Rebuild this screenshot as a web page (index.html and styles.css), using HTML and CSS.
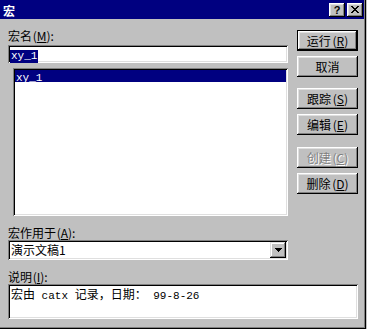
FILE: index.html
```html
<!DOCTYPE html>
<html lang="zh-CN">
<head>
  <meta charset="UTF-8" />
  <title>宏</title>
  <link rel="stylesheet" href="styles.css">
</head>
<body>

  <div class="window">
    <!-- Title bar -->
    <div class="titlebar">
      <span class="title">宏</span>
      <div class="title-buttons">
        <span class="tbtn help">?</span>
        <span class="tbtn">
          <svg width="8" height="7" viewBox="0 0 8 7">
            <path d="M0 0h2v1h1v1h2v-1h1v-1h2v1h-1v1h-1v1h-1v1h1v1h1v1h1v1h-2v-1h-1v-1h-2v1h-1v1h-2v-1h1v-1h1v-1h1v-1h-1v-1h-1v-1h-1z" fill="#000"/>
          </svg>
        </span>
      </div>
    </div>

    <div class="content">
      <div class="main">
        <div class="left">
          <div class="label">宏名 (<u>M</u>):</div>
          <div class="field name-field"><span class="mono selected">xy_1</span></div>
          <div class="field list">
            <div class="list-item selected"><span class="mono">xy_1</span></div>
          </div>
        </div>

        <div class="buttons">
          <button class="btn default">运行 (<u>R</u>)</button>
          <button class="btn">取消</button>
          <button class="btn sep">跟踪 (<u>S</u>)</button>
          <button class="btn">编辑 (<u>E</u>)</button>
          <button class="btn sep2 disabled">创建 (<u>C</u>)</button>
          <button class="btn">删除 (<u>D</u>)</button>
        </div>
      </div>

      <div class="label spaced">宏作用于 (<u>A</u>):</div>
      <div class="field combo">
        <span class="combo-text">演示文稿1</span>
        <span class="combo-button">
          <svg width="7" height="4" viewBox="0 0 7 4">
            <path d="M0 0h7v1h-1v1h-1v1h-1v1h-1v-1h-1v-1h-1v-1h-1z" fill="#000"/>
          </svg>
        </span>
      </div>

      <div class="label spaced">说明 (<u>I</u>):</div>
      <div class="field description">宏由<span class="mono"> catx </span>记录，日期：<span class="mono"> 99-8-26</span></div>
    </div>
  </div>

</body>
</html>
```

FILE: styles.css
```css
body {
  margin: 0;
  background-color: #c0c0c0;
  font-family: "Noto Sans CJK SC", sans-serif;
  font-size: 12px;
  line-height: 14px;
  color: #000;
}

/* Window frame */
.window {
  width: 366px;
  height: 329px;
  box-sizing: border-box;
  padding-right: 1px;
  background-color: #c0c0c0;
  border-right: 1px solid #000;
  border-bottom: 1px solid #000;
  box-shadow: inset -1px -1px #808080;
}

/* Title bar */
.titlebar {
  height: 19px;
  background-color: #000080;
  display: flex;
  justify-content: space-between;
  align-items: center;
  padding: 0 1px 0 3px;
}

.title {
  color: white;
  font-weight: bold;
  padding-top: 2px;
}

.title-buttons {
  display: flex;
  gap: 2px;
}

.tbtn {
  width: 16px;
  height: 14px;
  box-sizing: border-box;
  display: flex;
  align-items: center;
  justify-content: center;
  background-color: #c0c0c0;
  box-shadow: inset -1px -1px #000, inset 1px 1px #fff, inset -2px -2px #808080, inset 2px 2px #dfdfdf;
}

.tbtn.help {
  font-family: "Liberation Sans", sans-serif;
  font-weight: bold;
  font-size: 11px;
  line-height: 12px;
}

/* Content */
.content {
  padding: 10px 0 0 8px;
}

.main {
  display: flex;
  gap: 9px;
}

.left {
  width: 280px;
}

.label {
  height: 14px;
  word-spacing: -2px;
}

.label.spaced {
  margin-top: 10px;
}

u {
  text-decoration-thickness: 1px;
  text-underline-offset: 1px;
}

.mono {
  font-family: "Liberation Mono", monospace;
  font-size: 11px;
}

/* Sunken fields */
.field {
  box-sizing: border-box;
  background-color: white;
  box-shadow: inset 1px 1px #808080, inset -1px -1px #fff, inset 2px 2px #000, inset -2px -2px #dfdfdf;
}

.name-field {
  height: 18px;
  margin-top: 2px;
  padding: 2px 2px 0;
  line-height: 13px;
}

.selected {
  background-color: #000080;
  color: white;
}

.name-field .selected {
  display: inline-block;
  padding: 0 1px;
}

.list {
  height: 148px;
  width: 275px;
  margin: 5px 0 0 5px;
  padding: 2px;
}

.list-item {
  height: 12px;
  line-height: 12px;
  padding-left: 1px;
}

/* Buttons */
.buttons {
  display: flex;
  flex-direction: column;
  gap: 5px;
  padding-top: 1px;
}

.btn {
  width: 61px;
  height: 21px;
  box-sizing: border-box;
  padding: 0;
  border: none;
  background-color: #c0c0c0;
  font-family: "Noto Sans CJK SC", sans-serif;
  font-size: 12px;
  line-height: 14px;
  word-spacing: -1px;
  color: #000;
  box-shadow: inset -1px -1px #000, inset 1px 1px #fff, inset -2px -2px #808080, inset 2px 2px #dfdfdf;
}

.btn.default {
  border: 1px solid #000;
}

.btn.sep {
  margin-top: 6px;
}

.btn.sep2 {
  margin-top: 7px;
}

.btn.disabled {
  color: #808080;
  text-shadow: 1px 1px #fff;
}

/* Combo box */
.combo {
  width: 280px;
  height: 20px;
  display: flex;
  align-items: center;
  justify-content: space-between;
  padding: 2px;
}

.combo-text {
  padding-left: 1px;
}

.combo-button {
  width: 16px;
  height: 16px;
  box-sizing: border-box;
  display: flex;
  align-items: center;
  justify-content: center;
  background-color: #c0c0c0;
  box-shadow: inset -1px -1px #000, inset 1px 1px #dfdfdf, inset -2px -2px #808080, inset 2px 2px #fff;
}

/* Description */
.description {
  width: 350px;
  height: 35px;
  padding: 3px 3px 0;
}
```
